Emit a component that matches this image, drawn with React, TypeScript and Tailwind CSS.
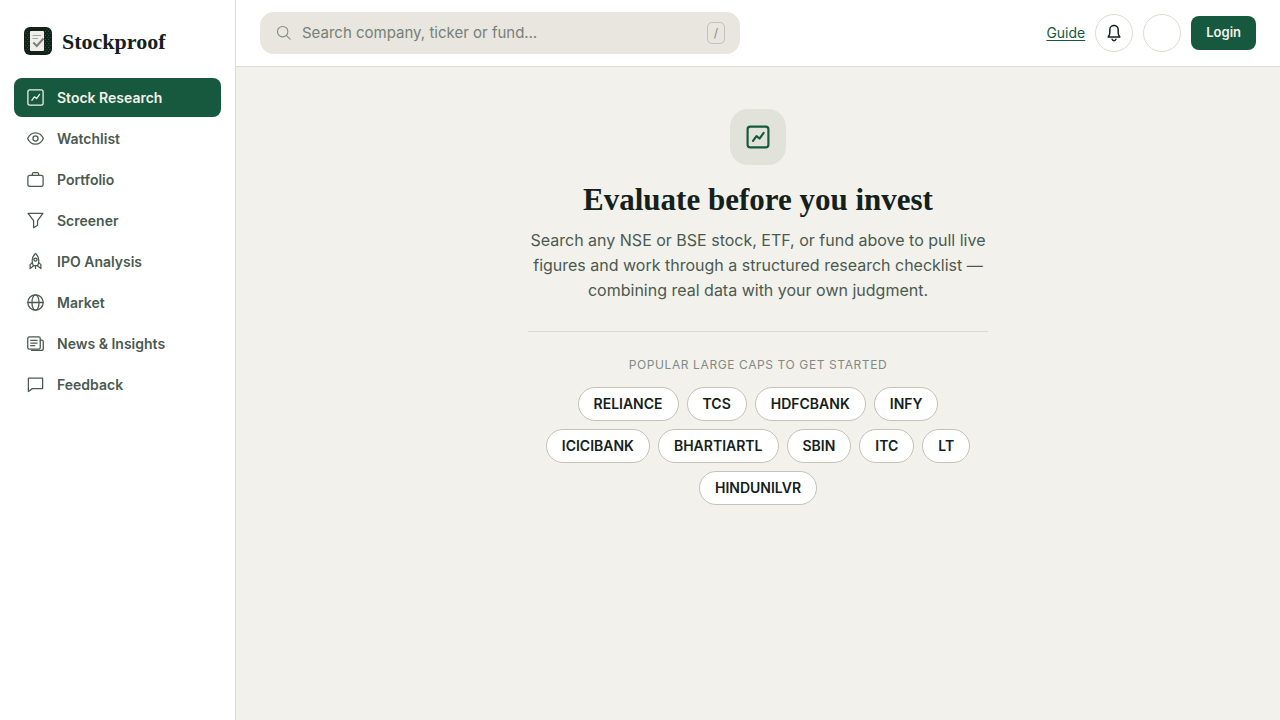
import type { ReactNode } from "react";

function Icon({ children, className }: { children: ReactNode; className: string }) {
  return (
    <svg
      viewBox="0 0 24 24"
      fill="none"
      stroke="currentColor"
      strokeLinecap="round"
      strokeLinejoin="round"
      aria-hidden="true"
      className={className}
    >
      {children}
    </svg>
  );
}

const chart = (
  <>
    <rect x="2.4" y="2.4" width="19.2" height="19.2" rx="2.4" />
    <path d="M7.4 15.6l3.2-4.4 2.8 2.2 3.8-5.200" />
  </>
);

const items: { label: string; icon: ReactNode }[] = [
  { label: "Stock Research", icon: chart },
  {
    label: "Watchlist",
    icon: (
      <>
        <path d="M2 12c2-4.4 5.6-7.2 10-7.2S20 7.6 22 12c-2 4.4-5.6 7.2-10 7.2S4 16.4 2 12z" />
        <circle cx="12" cy="12" r="3.2" />
      </>
    ),
  },
  {
    label: "Portfolio",
    icon: (
      <>
        <rect x="2.4" y="6.8" width="19.2" height="14" rx="2.4" />
        <path d="M8 6.8V5a1.8 1.8 0 0 1 1.8-1.8h4.4A1.8 1.8 0 0 1 16 5v1.8" />
      </>
    ),
  },
  { label: "Screener", icon: <path d="M2.6 3h18.8l-6.8 9.2v5.8l-5 3.2v-9L2.6 3z" /> },
  {
    label: "IPO Analysis",
    icon: (
      <>
        <path d="M12 1.8c3 2.6 4.2 5.8 4.2 9 0 2.6-.6 4.6-1.400 6.400H9.200c-.8-1.800-1.400-3.800-1.400-6.400 0-3.200 1.200-6.400 4.200-9z" />
        <circle cx="12" cy="9.6" r="2" />
        <path d="M7.9 13.4L5.2 16v5l4-3.4M16.1 13.4l2.7 2.6v5l-4-3.4M12 17.2v3.600" />
      </>
    ),
  },
  {
    label: "Market",
    icon: (
      <>
        <circle cx="12" cy="12" r="9.7" />
        <ellipse cx="12" cy="12" rx="4.5" ry="9.7" />
        <path d="M2.3 12h19.4" />
      </>
    ),
  },
  {
    label: "News & Insights",
    icon: (
      <>
        <rect x="2.2" y="3.6" width="15.8" height="15.6" rx="2" />
        <path d="M18 7.6h1.8a2 2 0 0 1 2 2v8.600a2.600 2.600 0 0 1-2.600 2.600H7M6 8h8M6 11.400h8M6 14.800h5" />
      </>
    ),
  },
  { label: "Feedback", icon: <path d="M3 4h18v13.200H8L3 20.800V4z" /> },
];

const stocks = ["RELIANCE", "TCS", "HDFCBANK", "INFY", "ICICIBANK", "BHARTIARTL", "SBIN", "ITC", "LT", "HINDUNILVR"];

function Logo() {
  return (
    <svg viewBox="0 0 28 28" className="size-7 shrink-0" aria-hidden="true">
      <defs>
        <pattern id="dots" width="3" height="4" patternUnits="userSpaceOnUse">
          <path d="M0 0h1v1H0zM1.500 2h1v1h-1z" fill="#176044" />
        </pattern>
      </defs>
      <rect width="28" height="28" rx="6" fill="#14211b" />
      <rect x="1" y="3" width="5" height="21" fill="url(#dots)" />
      <rect x="20" y="2" width="7" height="24" rx="2" fill="url(#dots)" />
      <rect x="6" y="4" width="14" height="20" rx="1" fill="#f0efe9" />
      <path d="M8.500 8.500h8.500M8.500 11.500h5.500" stroke="#9ca7a0" strokeWidth="1.200" />
      <path d="M9.300 15.500l3.500 3.500 6.700-7.500" fill="none" stroke="#74837a" strokeWidth="2" />
    </svg>
  );
}

function Sidebar() {
  return (
    <aside className="w-[236px] shrink-0 border-r border-[#dcdcd2] bg-white px-3.5 pt-[26px]">
      <a href="#" className="mb-[22px] flex h-[30px] items-center gap-2.5 px-2.5 font-['Liberation_Serif',serif] text-[22px] font-bold text-[#14211b]">
        <Logo />
        Stockproof
      </a>
      <nav aria-label="Main" className="flex flex-col gap-0.5">
        {items.map((item, i) => (
          <a
            key={item.label}
            href="#"
            aria-current={i === 0 ? "page" : undefined}
            className={
              i === 0
                ? "flex h-[39px] items-center gap-3 rounded-lg bg-[#17593e] px-3 text-sm font-semibold text-[#f3f1eb]"
                : "flex h-[39px] items-center gap-3 rounded-lg px-3 text-sm font-semibold text-[#4a5a50]"
            }
          >
            <Icon className="size-[19px] shrink-0 stroke-[1.6]">{item.icon}</Icon>
            {item.label}
          </a>
        ))}
      </nav>
    </aside>
  );
}

function Header() {
  return (
    <header className="flex items-center justify-between gap-6 border-b border-[#dcdcd2] bg-white px-6 py-3">
      <label className="flex h-[42px] w-full max-w-[480px] items-center gap-2.5 rounded-[14px] bg-[#e8e6de] pr-[15px] pl-4">
        <Icon className="size-4 shrink-0 stroke-[1.6] text-[#7f8c84]">
          <circle cx="10" cy="10" r="7.800" />
          <path d="M15.800 15.800l5.400 5.400" />
        </Icon>
        <input
          type="search"
          aria-label="Search company, ticker or fund"
          placeholder="Search company, ticker or fund…"
          className="min-w-0 flex-1 bg-transparent text-[15px] text-[#14211b] outline-none placeholder:text-[#758078]"
        />
        <kbd className="flex h-[22px] w-[18px] items-center justify-center rounded-[5px] border border-[#c4c3b6] font-['Inter',sans-serif] text-xs text-[#7f8c84]">
          /
        </kbd>
      </label>
      <div className="flex items-center gap-2.5">
        <a href="#" className="text-sm text-[#17593e] underline underline-offset-2">
          Guide
        </a>
        <button type="button" aria-label="Notifications" className="flex size-[38px] items-center justify-center rounded-full border border-[#dcdcd2] text-[#14211b]">
          <Icon className="size-[18px] stroke-2">
            <path d="M4.200 17.200c1.500-1.600 2.200-3.200 2.200-5.600V7.600a5.600 5.600 0 0 1 11.200 0v4c0 2.400.7 4 2.200 5.600H4.200z" />
            <path d="M9.400 20.200a2.700 2.700 0 0 0 5.200 0" />
          </Icon>
        </button>
        <button type="button" aria-label="Theme" className="size-[38px] rounded-full border border-[#dcdcd2]" />
        <button type="button" className="h-[34px] rounded-lg bg-[#17593e] px-[15px] text-[13px] font-semibold text-[#f3f1eb]">
          Login
        </button>
      </div>
    </header>
  );
}

export default function App() {
  return (
    <div className="flex min-h-screen bg-[#f3f1ec] font-['Inter',sans-serif] text-[#14211b]">
      <Sidebar />
      <div className="flex min-w-0 flex-1 flex-col">
        <Header />
        <main className="flex flex-1 flex-col items-center px-6 py-[42px]">
          <section className="flex w-full max-w-[460px] flex-col items-center text-center">
            <div className="flex size-14 items-center justify-center rounded-[18px] bg-[#e1e2da] text-[#17593e]">
              <Icon className="size-[26px] stroke-2">{chart}</Icon>
            </div>
            <h1 className="mt-[17px] font-['Liberation_Serif',serif] text-[31px] leading-9 font-bold">
              Evaluate before you invest
            </h1>
            <p className="mt-2.5 text-base leading-[25px] text-[#4a5a50]">
              Search any NSE or BSE stock, ETF, or fund above to pull live figures and work through a structured research checklist — combining real data with your own judgment.
            </p>
            <div className="mt-7 w-full border-t border-[#dcdcd2] pt-6">
              <h2 className="text-xs leading-[18px] tracking-wider text-[#7f8c84] uppercase">Popular large caps to get started</h2>
              <div className="mt-[13px] flex flex-wrap justify-center gap-2">
                {stocks.map((stock) => (
                  <button
                    key={stock}
                    type="button"
                    className="h-[34px] rounded-full border border-[#c4c3b6] bg-white px-[15px] text-sm font-semibold"
                  >
                    {stock}
                  </button>
                ))}
              </div>
            </div>
          </section>
        </main>
      </div>
    </div>
  );
}
